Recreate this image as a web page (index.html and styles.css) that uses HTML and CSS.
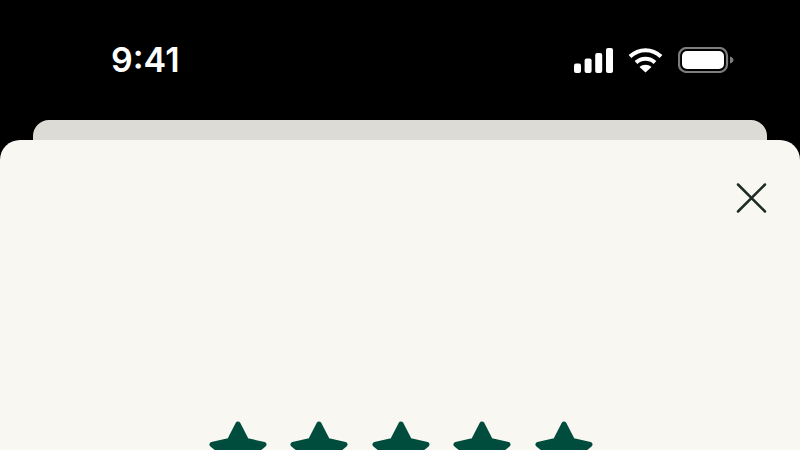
FILE: index.html
```html
<!DOCTYPE html>
<html lang="en">
<head>
<meta charset="utf-8">
<title>Rating</title>
<link rel="stylesheet" href="styles.css">
</head>
<body>
<div class="status">
  <span class="time">9:41</span>
  <div class="indicators">
    <svg class="signal" width="39" height="25" viewBox="0 0 39 25"><g fill="#fff"><rect x="0" y="15.500" width="7" height="9.500" rx="2"/><rect x="10.600" y="10.500" width="7" height="14.500" rx="2"/><rect x="21.200" y="5" width="7" height="20" rx="2"/><rect x="32" y="0" width="7" height="25" rx="2"/></g></svg>
    <svg class="wifi" width="35" height="25" viewBox="0 0 35 25"><g fill="none" stroke="#fff" stroke-width="4"><path d="M2 8.500C11 0 24 0 33 8.500"/><path d="M8 14.500C13.500 9.500 21.500 9.500 27 14.500"/></g><path fill="#fff" d="M17.500 24.500L11.500 19C15 16 20 16 23.500 19Z"/></svg>
    <svg class="battery" width="56" height="26" viewBox="0 0 56 26"><rect x="1" y="1" width="48" height="24" rx="7.500" fill="none" stroke="#7d7d7d" stroke-width="2.200"/><rect x="4" y="4" width="42" height="18" rx="5" fill="#fff"/><path fill="#7d7d7d" d="M52 9.500C54.500 10.500 55.500 11.500 55.500 13S54.500 15.500 52 16.500Z"/></svg>
  </div>
</div>
<div class="back-card"></div>
<main class="sheet">
  <div class="sheet-head">
    <svg class="close" width="32" height="32" viewBox="0 0 32 32"><path d="M3 2.500L30 29.500M30 2.500L3 29.500" fill="none" stroke="#1d2a26" stroke-width="2.500" stroke-linecap="round"/></svg>
  </div>
  <div class="stars">
    <svg class="star" width="58" height="56" viewBox="0 0 58 56"><path d="M29 3L37.500 19.500L55 23.500L41 35L45 53L29 44L13 53L17 35L3 23.500L20.500 19.500Z"/></svg>
    <svg class="star" width="58" height="56" viewBox="0 0 58 56"><path d="M29 3L37.500 19.500L55 23.500L41 35L45 53L29 44L13 53L17 35L3 23.500L20.500 19.500Z"/></svg>
    <svg class="star" width="58" height="56" viewBox="0 0 58 56"><path d="M29 3L37.500 19.500L55 23.500L41 35L45 53L29 44L13 53L17 35L3 23.500L20.500 19.500Z"/></svg>
    <svg class="star" width="58" height="56" viewBox="0 0 58 56"><path d="M29 3L37.500 19.500L55 23.500L41 35L45 53L29 44L13 53L17 35L3 23.500L20.500 19.500Z"/></svg>
    <svg class="star" width="58" height="56" viewBox="0 0 58 56"><path d="M29 3L37.500 19.500L55 23.500L41 35L45 53L29 44L13 53L17 35L3 23.500L20.500 19.500Z"/></svg>
  </div>
</main>
</body>
</html>
```
FILE: styles.css
```css
html, body {
  margin: 0;
  height: 100%;
}
body {
  background: #000;
  overflow: hidden;
  display: flex;
  flex-direction: column;
  font-family: "Inter", "Liberation Sans", sans-serif;
}
.status {
  height: 120px;
  flex: none;
  display: flex;
  justify-content: space-between;
  align-items: flex-start;
  padding: 0 66px 0 111px;
  box-sizing: border-box;
}
.time {
  color: #fff;
  font-size: 34px;
  font-weight: 600;
  line-height: 40px;
  margin-top: 40px;
}
.indicators {
  display: flex;
  align-items: center;
  gap: 15px;
  margin-top: 47px;
}
.signal, .wifi, .battery {
  display: block;
}
.back-card {
  flex: none;
  height: 20px;
  margin: 0 33px;
  background: #dcdbd6;
  border-radius: 16px 16px 0 0;
}
.sheet {
  flex: 1;
  min-height: 0;
  overflow: hidden;
  background: #f8f7f2;
  border-radius: 20px 20px 0 0;
  display: flex;
  flex-direction: column;
}
.sheet-head {
  height: 281px;
  flex: none;
  display: flex;
  justify-content: flex-end;
  align-items: flex-start;
  padding: 42px 33px 0 0;
  box-sizing: border-box;
}
.stars {
  display: flex;
  flex: none;
  justify-content: center;
  gap: 23.500px;
  padding-left: 1px;
}
.star {
  flex: none;
}
.star path {
  fill: #004c3d;
  stroke: #004c3d;
  stroke-width: 5;
  stroke-linejoin: round;
}
```
